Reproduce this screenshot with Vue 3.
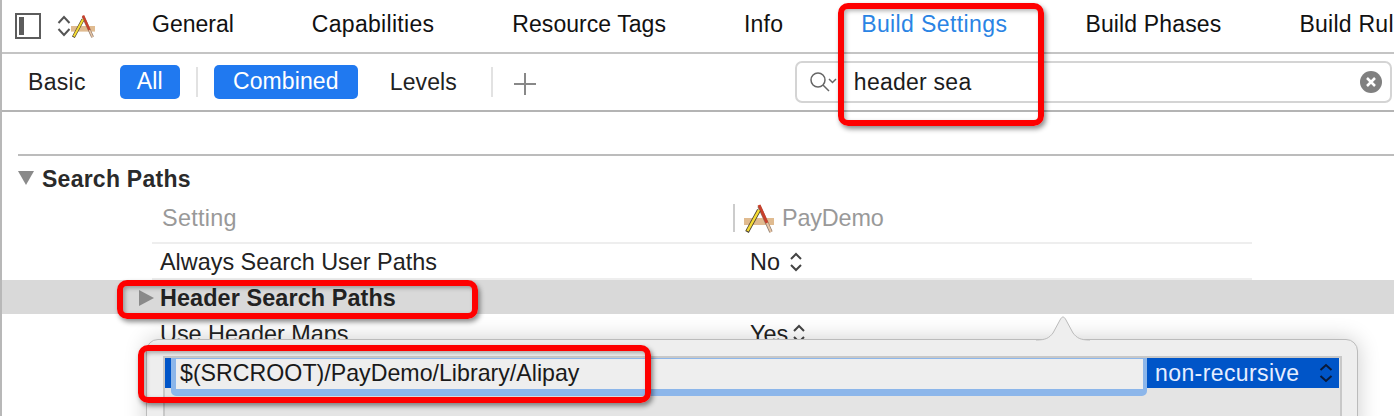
<script setup>
const tabs = [
  { name: 'General', spacing: '0' },
  { name: 'Capabilities', spacing: '0.3px' },
  { name: 'Resource Tags', spacing: '0.05px' },
  { name: 'Info', spacing: '0.2px' },
  { name: 'Build Settings', spacing: '0.4px' },
  { name: 'Build Phases', spacing: '0.15px' },
  { name: 'Build Rules', spacing: '0.25px' }
]
</script>

<template>
  <div class="page">
    <header class="tabbar">
      <div class="tools">
        <svg class="sidebar" width="26" height="26" viewBox="0 0 26 26">
          <rect x="1" y="1" width="24" height="24" fill="#fff" stroke="#5c5c5c" stroke-width="2" />
          <rect x="4" y="4" width="5" height="18" fill="#5c5c5c" />
        </svg>
        <svg class="stepper" width="14" height="24" viewBox="0 0 14 24">
          <path d="M1.500 9 7 3 12.500 9M1.500 15 7 21 12.500 15" fill="none" stroke="#555" stroke-width="2" />
        </svg>
        <svg class="xcode" width="24" height="26" viewBox="0 0 30 32">
          <rect x="0" y="16" width="30" height="7" fill="#e0bb90" />
          <path d="M15 4 27 30" stroke="#8c7a6c" stroke-width="3.500" />
          <path d="M15 3 23 21" stroke="#c8402c" stroke-width="3" />
          <path d="M23 21 27 30" stroke="#e6c4a4" stroke-width="2" />
          <path d="M3 30 15 8" stroke="#4a4030" stroke-width="4" />
          <path d="M3.500 29 15 8" stroke="#f6dc34" stroke-width="2.500" />
        </svg>
      </div>
      <nav class="tabs">
        <span
          v-for="tab in tabs"
          :key="tab.name"
          class="tab"
          :class="{ active: tab.name === 'Build Settings' }"
          :style="{ letterSpacing: tab.spacing }"
        >{{ tab.name }}</span>
      </nav>
    </header>

    <div class="filterbar">
      <span class="plain basic">Basic</span>
      <span class="pill all">All</span>
      <i class="sep first"></i>
      <span class="pill combined">Combined</span>
      <span class="plain levels">Levels</span>
      <i class="sep second"></i>
      <svg class="plus" width="24" height="24" viewBox="0 0 24 24">
        <path d="M12 1v22M1 12h22" stroke="#888" stroke-width="2" />
      </svg>
      <div class="search">
        <svg class="glass" width="30" height="24" viewBox="0 0 30 24">
          <circle cx="10" cy="10" r="7" fill="none" stroke="#666" stroke-width="1.500" />
          <path d="M15 15l6 6" stroke="#666" stroke-width="1.500" />
          <path d="M21 9l3.500 3.500L28 9" fill="none" stroke="#666" stroke-width="1.500" />
        </svg>
        <span class="query">header sea</span>
        <svg class="clear" width="22" height="22" viewBox="0 0 22 22">
          <circle cx="11" cy="11" r="11" fill="#808080" />
          <path d="M7 7l8 8M15 7l-8 8" stroke="#fff" stroke-width="2.500" />
        </svg>
      </div>
    </div>

    <section class="content">
      <div class="section-title">
        <i class="tri-down"></i>
        <span>Search Paths</span>
      </div>
      <div class="table-head">
        <span class="col-setting">Setting</span>
        <i class="col-sep"></i>
        <svg width="30" height="32" viewBox="0 0 30 32">
          <rect x="0" y="16" width="30" height="7" fill="#e0bb90" />
          <path d="M15 4 27 30" stroke="#8c7a6c" stroke-width="3.500" />
          <path d="M15 3 23 21" stroke="#c8402c" stroke-width="3" />
          <path d="M23 21 27 30" stroke="#e6c4a4" stroke-width="2" />
          <path d="M3 30 15 8" stroke="#4a4030" stroke-width="4" />
          <path d="M3.500 29 15 8" stroke="#f6dc34" stroke-width="2.500" />
        </svg>
        <span class="col-target">PayDemo</span>
      </div>
      <div class="row always">
        <span class="name">Always Search User Paths</span>
        <span class="value">No
          <svg width="14" height="22" viewBox="0 0 14 22"><path d="M2 8l5-5 5 5M2 14l5 5 5-5" fill="none" stroke="#444" stroke-width="2" /></svg>
        </span>
      </div>
      <div class="row selected">
        <i class="tri-right"></i>
        <span class="name strong">Header Search Paths</span>
      </div>
      <div class="row maps">
        <span class="name">Use Header Maps</span>
        <span class="value">Yes
          <svg width="14" height="22" viewBox="0 0 14 22"><path d="M2 8l5-5 5 5M2 14l5 5 5-5" fill="none" stroke="#444" stroke-width="2" /></svg>
        </span>
      </div>
    </section>

    <div class="popover">
      <svg class="notch" width="54" height="26" viewBox="0 0 54 26">
        <path d="M0 25C10 25 13 23 17 18L24 5C26 1 28 1 30 5L37 18C41 23 44 25 54 25V26H0Z" fill="#eee" />
        <path d="M0 25C10 25 13 23 17 18L24 5C26 1 28 1 30 5L37 18C41 23 44 25 54 25" fill="none" stroke="#bbb" />
      </svg>
      <div class="paths">
        <i class="marker"></i>
        <div class="field">$(SRCROOT)/PayDemo/Library/Alipay</div>
        <div class="mode">
          <span>non-recursive</span>
          <svg width="14" height="22" viewBox="0 0 14 22"><path d="M1.500 8l5.500-5 5.500 5M1.500 14l5.500 5 5.500-5" fill="none" stroke="#0a1a3a" stroke-width="2" /></svg>
        </div>
      </div>
    </div>

    <i class="mark mark-a"></i>
    <i class="mark mark-b"></i>
    <i class="mark mark-c"></i>
  </div>
</template>

<style>
html, body { margin: 0; background: #fff; overflow: hidden; }
</style>

<style scoped>
.page {
  position: relative;
  width: 1394px;
  height: 416px;
  overflow: hidden;
  box-sizing: border-box;
  border-left: 2px solid #b8b8b8;
  background: #fff;
  font-family: "Liberation Sans", Arial, sans-serif;
  font-size: 23px;
  color: #222;
}
i { display: block; }

.tabbar {
  display: flex;
  align-items: center;
  box-sizing: border-box;
  border-bottom: 2px solid #c4c4c4;
  height: 54px;
}
.tools { display: flex; align-items: center; width: 150px; flex: none; padding-left: 13px; box-sizing: border-box; }
.stepper { margin-left: 16px; }
.tabs { display: flex; gap: 78px; white-space: nowrap; color: #111; margin-top: -4px; }
.active { color: #2a84e4; }

.filterbar {
  position: relative;
  display: flex;
  align-items: center;
  height: 58px;
  box-sizing: border-box;
  border-bottom: 2px solid #b4b4b4;
  letter-spacing: .1px;
}
.plain { flex: none; }
.basic { margin-left: 26px; letter-spacing: .3px; }
.pill {
  flex: none;
  height: 34px;
  line-height: 33px;
  box-sizing: border-box;
  border-radius: 5px;
  background: #2079f0;
  color: #fff;
  text-align: center;
}
.all { width: 60px; margin-left: 34px; }
.sep { width: 2px; height: 30px; background: #e2e2e2; flex: none; }
.first { margin-left: 16px; }
.combined { width: 144px; margin-left: 16px; }
.levels { margin-left: 32px; }
.second { margin-left: 34px; }
.plus { margin-left: 20px; flex: none; margin-top: 4px; }
.search {
  display: flex;
  align-items: center;
  height: 42px;
  width: 597px;
  margin-left: 258px;
  flex: none;
  box-sizing: border-box;
  border: 2px solid #d4d4d4;
  border-radius: 7px;
  padding: 0 8px 0 11px;
}
.glass { flex: none; }
.query { margin-left: 16px; flex: 1; color: #1c1c1c; letter-spacing: .25px; }
.clear { flex: none; }

.content { position: relative; }
.section-title {
  display: flex;
  align-items: center;
  margin: 42px 0 0 16px;
  border-top: 2px solid #bcbcbc;
  height: 46px;
  font-weight: 700;
  font-size: 23px;
  letter-spacing: .25px;
  color: #2a2a2a;
}
.tri-down {
  width: 0; height: 0;
  border-left: 8px solid transparent;
  border-right: 8px solid transparent;
  border-top: 14px solid #8a8a8a;
  margin-right: 8px;
  margin-top: -2px;
}
.table-head {
  display: flex;
  align-items: center;
  height: 44px;
  margin: -4px 142px 0 150px;
  padding: 0 0 4px 10px;
  box-sizing: border-box;
  height: 46px;
  border-bottom: 2px solid #eee;
  color: #999;
  font-size: 23.400px;
}
.col-setting { width: 571px; flex: none; letter-spacing: .3px; }
.col-sep { width: 2px; height: 28px; background: #ccc; margin-right: 9px; }
.col-target { margin-left: 8px; letter-spacing: -.15px; }
.row {
  display: flex;
  align-items: center;
  height: 34px;
  padding-top: 2px;
  box-sizing: border-box;
  font-size: 23.400px;
}
.name { width: 590px; flex: none; }
.value { display: flex; align-items: center; gap: 9px; }
.always { height: 36px; margin: 0 142px 0 150px; padding-left: 8px; border-bottom: 2px solid #eee; }
.selected { background: #d9d9d9; padding-left: 137px; }
.tri-right {
  width: 0; height: 0;
  border-top: 8px solid transparent;
  border-bottom: 8px solid transparent;
  border-left: 15px solid #8a8a8a;
  margin-right: 6px;
}
.strong { font-weight: 700; color: #222; letter-spacing: .1px; }
.maps { padding-left: 158px; margin-top: 2px; }
.maps .value { gap: 4px; }

.popover {
  position: absolute;
  left: 144px;
  top: 339px;
  width: 1212px;
  height: 100px;
  box-sizing: border-box;
  background: #eee;
  border: 1px solid #bbb;
  border-radius: 12px;
  box-shadow: 0 0 22px rgba(0, 0, 0, .2);
  padding: 16px 15px 0 16px;
}
.notch {
  position: absolute;
  left: 889px;
  top: -25px;
}
.paths {
  position: relative;
  display: flex;
  height: 80px;
  box-sizing: border-box;
  border: 2px solid #c8c8c8;
  border-bottom: 0;
  background: #e4e4e4;
  padding-right: 1px;
}
.marker { width: 6px; height: 30px; background: #0055c8; flex: none; }
.field {
  flex: 1;
  height: 38px;
  line-height: 29px;
  box-sizing: border-box;
  background: #eee;
  border-style: solid;
  border-color: #8cb6ea;
  border-width: 1px 4px 7px 5px;
  border-radius: 0 0 5px 5px;
  padding-left: 4px;
  font-size: 23.200px;
  color: #1a1a1a;
}
.mode {
  display: flex;
  align-items: center;
  justify-content: space-between;
  width: 192px;
  height: 30px;
  flex: none;
  box-sizing: border-box;
  padding: 0 6px 0 8px;
  background: #0055c8;
  color: #e6eeff;
  font-size: 23px;
  letter-spacing: .4px;
}

.mark {
  position: absolute;
  box-sizing: border-box;
  border: 6px solid #fe0000;
  border-radius: 10px;
  box-shadow: 2px 3px 5px rgba(0, 0, 0, .45), inset 2px 2px 4px rgba(0, 0, 0, .3);
}
.mark-a { left: 836px; top: 3px; width: 206px; height: 123px; }
.mark-b { left: 115px; top: 280px; width: 361px; height: 39px; }
.mark-c { left: 136px; top: 345px; width: 513px; height: 58px; }
</style>
